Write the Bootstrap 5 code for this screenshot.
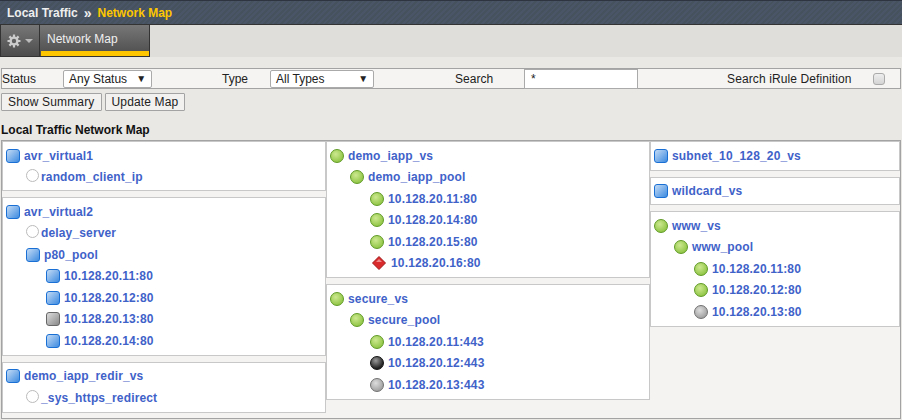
<!DOCTYPE html>
<html lang="en">
<head>
    <meta charset="UTF-8">
    <title>Network Map</title>
    <link rel="stylesheet" href="https://cdn.jsdelivr.net/npm/bootstrap@5.3.0/dist/css/bootstrap.min.css">
    <style>
        body {
            background-color: #e9e8e5;
            color: #222;
            font-family: "Liberation Sans", Arial, sans-serif;
            font-size: 12px;
            height: 420px;
            overflow: hidden;
        }
        .crumb-bar {
            height: 25px;
            background-color: #4a5668;
            background-image: repeating-linear-gradient(135deg, #4a5668 0 2px, #47525f 2px 4px);
            border-top: 1px solid #2f3540;
            border-bottom: 1px solid #333;
            color: #eee;
            font-weight: 700;
            padding-left: 7px;
        }
        .crumb-sep { margin: 0 6px; font-size: 14px; line-height: 1; }
        .crumb-now { color: #fdc600; }
        .tab-bar { height: 32px; background-color: #dfdeda; }
        .gear-tab {
            width: 40px;
            background: linear-gradient(#777, #4c4c4c);
            border: 1px solid #333;
            border-top: 0;
            color: #ccc;
        }
        .caret-mini {
            width: 0;
            border-left: 4px solid transparent;
            border-right: 4px solid transparent;
            border-top: 4px solid #bbb;
        }
        .page-tab {
            width: 110px;
            background: linear-gradient(#777, #4c4c4c);
            border: 1px solid #333;
            border-top: 0;
            border-left: 0;
            color: #f0f0f0;
            padding: 5px 0 0 7px;
        }
        .page-tab-line { height: 5px; background-color: #fdc600; margin-left: -6px; }
        .filter-bar {
            margin: 11px 1px 0 1px;
            height: 21px;
            background-color: #f5f4f2;
            border: 1px solid #a3a3a3;
        }
        .filter-select {
            height: 18px;
            background-color: #fff;
            border: 1px solid #aaa;
            border-radius: 2px;
            padding: 0 5px;
        }
        .sel-arrow { font-size: 10px; }
        .sel-status { width: 89px; margin-left: 27px; }
        .sel-type { width: 104px; margin-left: 22px; }
        .lbl-type { margin-left: 70px; }
        .lbl-search { margin-left: 81px; }
        .search-box {
            width: 114px;
            height: 20px;
            margin-left: 31px;
            background-color: #fff;
            border: 1px solid #aaa;
            padding: 0 6px;
        }
        .lbl-irule { margin-left: 89px; letter-spacing: .1px; }
        .check-box {
            width: 12px;
            height: 12px;
            margin-left: 22px;
            background: linear-gradient(#eee, #d4d4d4);
            border: 1px solid #aaa;
            border-radius: 3px;
        }
        .btn-row { margin: 4px 0 0 1px; gap: 3px; }
        .btn-plain {
            height: 18px;
            background-color: #f2f1ef;
            border: 1px solid #a3a3a3;
            border-radius: 1px;
            padding: 0 6px;
            line-height: 16px;
            letter-spacing: .15px;
        }
        .map-title { margin: 10px 0 0 1px; height: 19px; line-height: 19px; font-weight: 700; color: #111; }
        .map-wrap {
            height: 279px;
            margin: 0 1px;
            background-color: #f4f3f1;
            border: 1px solid #a3a3a3;
        }
        .map-col { gap: 6px; }
        .col-a, .col-b { width: 324px; }
        .node-panel { background-color: #fff; border: 1px solid #c8c8c8; padding: 3px 0 3px 3px; }
        .node-row { height: 21.5px; font-weight: 700; color: #3f62c9; gap: 4px; white-space: nowrap; letter-spacing: .15px; }
        .lvl-1 { padding-left: 20px; }
        .lvl-2 { padding-left: 40px; }
        .row-short { height: 20.5px; }
        .ic { width: 14px; height: 14px; flex: none; }
        .ic-sq-blue {
            border-radius: 3px;
            border: 1px solid #1a6fd4;
            background: linear-gradient(135deg, #c4dbf5, #3d8be0);
        }
        .ic-sq-gray {
            border-radius: 3px;
            border: 1px solid #666;
            background: linear-gradient(135deg, #ddd, #888);
        }
        .ic-green {
            border-radius: 50%;
            border: 1px solid #5f9a24;
            background: radial-gradient(circle at 40% 35%, #cde890, #7dbb2e);
        }
        .ic-gray {
            border-radius: 50%;
            border: 1px solid #707070;
            background: radial-gradient(circle at 40% 35%, #ddd, #8d8d8d);
        }
        .ic-black {
            border-radius: 50%;
            border: 1px solid #111;
            background: radial-gradient(circle at 40% 30%, #999, #222 70%);
        }
        .ic-empty { width: 13px; height: 13px; border-radius: 50%; border: 1px solid #bbb; background-color: #fff; margin: -3px -2px 0 0; }
        .ic-red { margin: 0 1px 0 2px; }
    </style>
</head>
<body>
    <div class="crumb-bar d-flex align-items-center">
        <span>Local Traffic</span><span class="crumb-sep">&raquo;</span><span class="crumb-now">Network Map</span>
    </div>
    <div class="tab-bar d-flex">
        <div class="gear-tab d-flex align-items-center justify-content-center gap-1">
            <svg width="14" height="14" viewBox="0 0 14 14"><circle cx="7" cy="7" r="3.4" fill="none" stroke="#ccc" stroke-width="2.4"/><path d="M7 .5v3M7 10.5v3M.5 7h3M10.5 7h3M2.4 2.4l2 2M9.6 9.6l2 2M11.6 2.4l-2 2M4.4 9.6l-2 2" stroke="#ccc" stroke-width="2.2"/></svg>
            <span class="caret-mini"></span>
        </div>
        <div class="page-tab d-flex flex-column justify-content-between">
            <span>Network Map</span>
            <div class="page-tab-line"></div>
        </div>
    </div>
    <div class="filter-bar d-flex align-items-center">
        <span>Status</span>
        <div class="filter-select sel-status d-flex justify-content-between align-items-center"><span>Any Status</span><span class="sel-arrow">&#9660;</span></div>
        <span class="lbl-type">Type</span>
        <div class="filter-select sel-type d-flex justify-content-between align-items-center"><span>All Types</span><span class="sel-arrow">&#9660;</span></div>
        <span class="lbl-search">Search</span>
        <div class="search-box">*</div>
        <span class="lbl-irule">Search iRule Definition</span>
        <div class="check-box"></div>
    </div>
    <div class="btn-row d-flex">
        <div class="btn-plain">Show Summary</div>
        <div class="btn-plain">Update Map</div>
    </div>
    <div class="map-title">Local Traffic Network Map</div>
    <div class="map-wrap d-flex">
        <div class="map-col col-a d-flex flex-column">
            <div class="node-panel">
                <div class="node-row d-flex align-items-center"><i class="ic ic-sq-blue"></i>avr_virtual1</div>
                <div class="node-row row-short lvl-1 d-flex align-items-center"><i class="ic ic-empty"></i>random_client_ip</div>
            </div>
            <div class="node-panel">
                <div class="node-row d-flex align-items-center"><i class="ic ic-sq-blue"></i>avr_virtual2</div>
                <div class="node-row lvl-1 d-flex align-items-center"><i class="ic ic-empty"></i>delay_server</div>
                <div class="node-row lvl-1 d-flex align-items-center"><i class="ic ic-sq-blue"></i>p80_pool</div>
                <div class="node-row lvl-2 d-flex align-items-center"><i class="ic ic-sq-blue"></i>10.128.20.11:80</div>
                <div class="node-row lvl-2 d-flex align-items-center"><i class="ic ic-sq-blue"></i>10.128.20.12:80</div>
                <div class="node-row lvl-2 d-flex align-items-center"><i class="ic ic-sq-gray"></i>10.128.20.13:80</div>
                <div class="node-row lvl-2 d-flex align-items-center"><i class="ic ic-sq-blue"></i>10.128.20.14:80</div>
            </div>
            <div class="node-panel">
                <div class="node-row d-flex align-items-center"><i class="ic ic-sq-blue"></i>demo_iapp_redir_vs</div>
                <div class="node-row lvl-1 d-flex align-items-center"><i class="ic ic-empty"></i>_sys_https_redirect</div>
            </div>
        </div>
        <div class="map-col col-b d-flex flex-column">
            <div class="node-panel">
                <div class="node-row d-flex align-items-center"><i class="ic ic-green"></i>demo_iapp_vs</div>
                <div class="node-row lvl-1 d-flex align-items-center"><i class="ic ic-green"></i>demo_iapp_pool</div>
                <div class="node-row lvl-2 d-flex align-items-center"><i class="ic ic-green"></i>10.128.20.11:80</div>
                <div class="node-row lvl-2 d-flex align-items-center"><i class="ic ic-green"></i>10.128.20.14:80</div>
                <div class="node-row lvl-2 d-flex align-items-center"><i class="ic ic-green"></i>10.128.20.15:80</div>
                <div class="node-row lvl-2 d-flex align-items-center"><svg class="ic ic-red" viewBox="0 0 14 14"><path d="M7 .5L13.5 7 7 13.5.5 7z" fill="#d92b2b" stroke="#a01818"/><path d="M7 3L10 6H4z" fill="#f08a8a"/></svg>10.128.20.16:80</div>
            </div>
            <div class="node-panel">
                <div class="node-row d-flex align-items-center"><i class="ic ic-green"></i>secure_vs</div>
                <div class="node-row lvl-1 d-flex align-items-center"><i class="ic ic-green"></i>secure_pool</div>
                <div class="node-row lvl-2 d-flex align-items-center"><i class="ic ic-green"></i>10.128.20.11:443</div>
                <div class="node-row lvl-2 d-flex align-items-center"><i class="ic ic-black"></i>10.128.20.12:443</div>
                <div class="node-row lvl-2 d-flex align-items-center"><i class="ic ic-gray"></i>10.128.20.13:443</div>
            </div>
        </div>
        <div class="map-col flex-fill d-flex flex-column">
            <div class="node-panel">
                <div class="node-row d-flex align-items-center"><i class="ic ic-sq-blue"></i>subnet_10_128_20_vs</div>
            </div>
            <div class="node-panel">
                <div class="node-row row-short d-flex align-items-center"><i class="ic ic-sq-blue"></i>wildcard_vs</div>
            </div>
            <div class="node-panel">
                <div class="node-row d-flex align-items-center"><i class="ic ic-green"></i>www_vs</div>
                <div class="node-row lvl-1 d-flex align-items-center"><i class="ic ic-green"></i>www_pool</div>
                <div class="node-row lvl-2 d-flex align-items-center"><i class="ic ic-green"></i>10.128.20.11:80</div>
                <div class="node-row lvl-2 d-flex align-items-center"><i class="ic ic-green"></i>10.128.20.12:80</div>
                <div class="node-row lvl-2 d-flex align-items-center"><i class="ic ic-gray"></i>10.128.20.13:80</div>
            </div>
        </div>
    </div>
    <script src="https://cdn.jsdelivr.net/npm/bootstrap@5.3.0/dist/js/bootstrap.bundle.min.js"></script>
</body>
</html>
